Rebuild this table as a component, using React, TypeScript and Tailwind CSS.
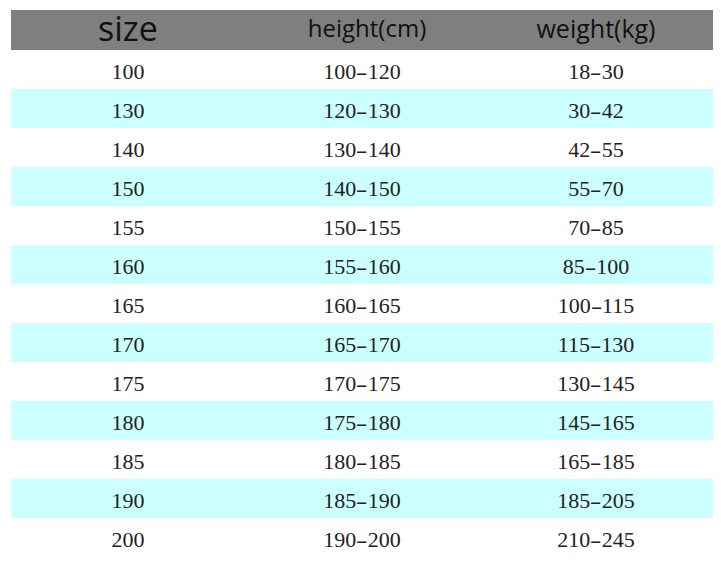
import React from 'react';

const ROWS: [string, string, string][] = [
  ['100', '100-120', '18-30'],
  ['130', '120-130', '30-42'],
  ['140', '130-140', '42-55'],
  ['150', '140-150', '55-70'],
  ['155', '150-155', '70-85'],
  ['160', '155-160', '85-100'],
  ['165', '160-165', '100-115'],
  ['170', '165-170', '115-130'],
  ['175', '170-175', '130-145'],
  ['180', '175-180', '145-165'],
  ['185', '180-185', '165-185'],
  ['190', '185-190', '185-205'],
  ['200', '190-200', '210-245'],
];

// the range dash in the chart is drawn wide, like a minus
const Cell = ({ text }: { text: string }) => {
  const parts = text.split('-');
  if (parts.length < 2) return <>{text}</>;
  return (
    <>
      {parts[0]}
      <span className="inline-block scale-x-[1.6] mx-[2px]">-</span>
      {parts[1]}
    </>
  );
};

export default function App() {
  return (
    <div className="w-[721px] h-[567px] bg-white overflow-hidden">
      <div className="ml-[11px] pt-[10px] w-[702px]">
        {/* Header */}
        <div className="grid grid-cols-3 h-[40px] bg-[#7f7f7f] text-[#111] font-['Open_Sans',sans-serif]">
          <div className="flex items-center justify-center text-[34px] leading-none pb-[4px]">size</div>
          <div className="flex items-center justify-center text-[24px] leading-none pb-[4px] pl-[10px]">height(cm)</div>
          <div className="flex items-center justify-center text-[25px] leading-none pb-[4px]">weight(kg)</div>
        </div>

        {/* Rows */}
        {ROWS.map((row, i) => (
          <div
            key={row[0]}
            className={`grid grid-cols-3 h-[39px] font-['Liberation_Serif',serif] text-[22px] text-[#222] ${
              i % 2 === 1 ? 'bg-[#ccffff]' : 'bg-white'
            }`}
          >
            {row.map((cell, j) => (
              <div key={j} className="flex items-center justify-center pt-[4px]">
                <Cell text={cell} />
              </div>
            ))}
          </div>
        ))}
      </div>
    </div>
  );
}
